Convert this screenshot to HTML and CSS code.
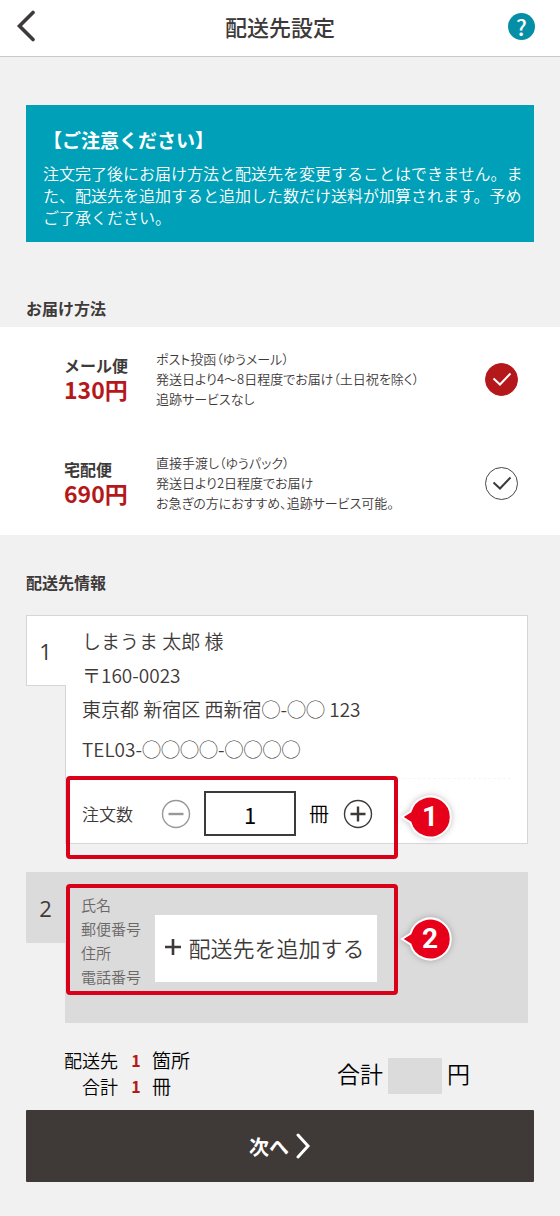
FILE: index.html
```html
<!DOCTYPE html>
<html lang="ja">
<head>
<meta charset="utf-8">
<meta name="viewport" content="width=device-width, initial-scale=1">
<title>配送先設定</title>
<link rel="stylesheet" href="styles.css">
</head>
<body>
<header class="header">
  <button class="icon-button" type="button" aria-label="戻る">
    <svg width="20" height="32" viewBox="0 0 20 32"><path d="M17 2.500 3.500 16 17 29.500" fill="none" stroke="#3e3a39" stroke-width="3.600" stroke-linecap="round" stroke-linejoin="miter"/></svg>
  </button>
  <h1 class="title">配送先設定</h1>
  <button class="help" type="button" aria-label="ヘルプ">?</button>
</header>

<main>
  <section class="notice">
    <h2 class="notice-title">【ご注意ください】</h2>
    <p class="notice-text">注文完了後にお届け方法と配送先を変更することはできません。また、配送先を追加すると追加した数だけ送料が加算されます。予めご了承ください。</p>
  </section>

  <section class="methods">
    <h2 class="section-title">お届け方法</h2>
    <div class="method-list">
      <label class="method">
        <span class="method-head"><span class="method-name">メール便</span><span class="method-price">130円</span></span>
        <span class="method-text">ポスト投函（ゆうメール）<br>発送日より4〜8日程度でお届け（土日祝を除く）<br>追跡サービスなし</span>
        <span class="check"><input class="check-input" type="radio" name="method" checked><svg class="check-mark" width="33" height="33" viewBox="0 0 33 33"><path d="M8.500 15.500 15 21.500 25.500 10.500"/></svg></span>
      </label>
      <label class="method">
        <span class="method-head"><span class="method-name">宅配便</span><span class="method-price">690円</span></span>
        <span class="method-text">直接手渡し（ゆうパック）<br>発送日より2日程度でお届け<br>お急ぎの方におすすめ、追跡サービス可能。</span>
        <span class="check"><input class="check-input" type="radio" name="method"><svg class="check-mark" width="33" height="33" viewBox="0 0 33 33"><path d="M8.500 15.500 15 21.500 25.500 10.500"/></svg></span>
      </label>
    </div>
  </section>

  <section class="addresses">
    <h2 class="section-title">配送先情報</h2>
    <article class="address">
      <div class="tab">1</div>
      <div class="card">
        <p class="line">しまうま 太郎 様</p>
        <p class="line">〒160-0023</p>
        <p class="line">東京都 新宿区 西新宿◯-◯◯ 123</p>
        <p class="line line-tel">TEL03-◯◯◯◯-◯◯◯◯</p>
        <div class="order">
          <label class="order-label" for="count">注文数</label>
          <button class="step step-minus" type="button" aria-label="減らす"><svg width="30" height="30" viewBox="0 0 30 30"><circle cx="15" cy="15" r="13.500"/><path d="M7.500 15h15"/></svg></button>
          <input class="count" id="count" type="text" inputmode="numeric" value="1">
          <span class="unit">冊</span>
          <button class="step" type="button" aria-label="増やす"><svg width="30" height="30" viewBox="0 0 30 30"><circle cx="15" cy="15" r="13.500"/><path d="M7.500 15h15M15 7.500v15"/></svg></button>
        </div>
        <div class="highlight highlight-order"></div>
        <div class="pin pin-order">
          <svg class="pin-shape" width="54" height="52" viewBox="0 0 54 52"><path d="M4 26 12.500 20.500A20.500 20.500 0 1 1 12.500 31.500Z"/></svg>
          <span class="pin-number">1</span>
        </div>
      </div>
    </article>

    <article class="address address-empty">
      <div class="tab">2</div>
      <div class="card">
        <ul class="fields">
          <li>氏名</li>
          <li>郵便番号</li>
          <li>住所</li>
          <li>電話番号</li>
        </ul>
        <button class="add" type="button"><svg width="18" height="18" viewBox="0 0 18 18"><path d="M1 9h16M9 1v16" stroke="#3e3a39" stroke-width="2.600"/></svg>配送先を追加する</button>
        <div class="highlight highlight-add"></div>
        <div class="pin pin-add">
          <svg class="pin-shape" width="54" height="52" viewBox="0 0 54 52"><path d="M4 26 12.500 20.500A20.500 20.500 0 1 1 12.500 31.500Z"/></svg>
          <span class="pin-number">2</span>
        </div>
      </div>
    </article>
  </section>

  <section class="summary">
    <dl class="totals">
      <dt>配送先</dt><dd><strong class="number">1</strong>箇所</dd>
      <dt>合計</dt><dd><strong class="number">1</strong>冊</dd>
    </dl>
    <p class="amount">合計<span class="amount-value"></span>円</p>
  </section>

  <button class="next" type="button">次へ<svg width="16" height="26" viewBox="0 0 16 26"><path d="M3 2 13 13 3 24" fill="none" stroke="#fff" stroke-width="3" stroke-linecap="round"/></svg></button>
</main>
</body>
</html>
```
FILE: styles.css
```css
* {
  box-sizing: border-box;
}

body,
h1,
h2,
p,
ul,
dl,
dd {
  margin: 0;
  padding: 0;
}

body {
  background: #f1f1f1;
  color: #3e3a39;
  font-family: "Noto Sans CJK JP", sans-serif;
  font-size: 16px;
}

button,
input {
  margin: 0;
  padding: 0;
  border: 0;
  color: inherit;
  font: inherit;
}

button {
  background: none;
  cursor: pointer;
}

svg {
  display: block;
}

.header {
  display: grid;
  grid-template-columns: 36px 1fr 27px;
  align-items: center;
  height: 57px;
  padding: 0 25px 4px 16px;
  border-bottom: 1px solid #c9c9c9;
  background: #fff;
}

.icon-button {
  justify-self: start;
}

.title {
  font-size: 22px;
  font-weight: 500;
  line-height: 32px;
  text-align: center;
}

.help {
  width: 27px;
  height: 27px;
  border-radius: 50%;
  background: #058fa6;
  color: #fff;
  font-size: 22px;
  font-weight: 500;
  line-height: 24px;
}

.notice {
  margin: 48px 26px 0;
  padding: 19px 8px 14px 17px;
  background: #00a0b8;
  color: #fff;
}

.notice-title {
  font-size: 19px;
  font-weight: 700;
  line-height: 32px;
}

.notice-text {
  margin-top: 6px;
  font-weight: 350;
  line-height: 22px;
}

.section-title {
  padding: 0 26px;
  font-size: 16px;
  font-weight: 700;
  line-height: 24px;
}

.methods {
  margin-top: 54px;
}

.method-list {
  margin-top: 7px;
  background: #fff;
}

.method {
  display: grid;
  grid-template-columns: 92px 1fr 33px;
  align-items: center;
  height: 104px;
  padding: 0 42px 0 64px;
}

.method-head {
  display: grid;
  padding-bottom: 4px;
}

.method-name {
  font-weight: 700;
  line-height: 24px;
}

.method-price {
  color: #b5181a;
  font-size: 23px;
  font-weight: 700;
  line-height: 24px;
}

.method-text {
  font-size: 13px;
  font-weight: 350;
  font-feature-settings: "palt";
  line-height: 20px;
}

.check {
  display: grid;
}

.check-input,
.check-mark {
  grid-area: 1 / 1;
}

.check-input {
  width: 33px;
  height: 33px;
  border: 1px solid #4a4645;
  border-radius: 50%;
  appearance: none;
}

.check-input:checked {
  border-color: #b5181a;
  background: #b5181a;
}

.check-mark {
  fill: none;
  stroke: #3e3a39;
  stroke-width: 2;
  pointer-events: none;
}

.check-input:checked + .check-mark {
  stroke: #fff;
}

.addresses {
  margin-top: 35px;
}

.address {
  display: grid;
  grid-template-columns: 39px 1fr;
  align-items: start;
  margin: 21px 32px 0 26px;
}

.tab {
  position: relative;
  z-index: 1;
  height: 71px;
  margin-right: -1px;
  padding-right: 2px;
  border: 1px solid #d6d6d6;
  border-right: 0;
  background: #fff;
  font-family: "Open Sans", sans-serif;
  font-size: 22px;
  line-height: 70px;
  text-align: center;
}

.card {
  position: relative;
  padding: 8px 16px 7px;
  border: 1px solid #d6d6d6;
  background: #fff;
}

.line {
  font-size: 19px;
  font-weight: 350;
  line-height: 34px;
}

.line-tel {
  margin-top: 6px;
}

.order {
  display: flex;
  align-items: center;
  margin-top: 12px;
  padding-top: 12px;
  border-top: 1px dashed #f6f6f6;
}

.order-label {
  width: 79px;
  font-size: 17px;
  font-weight: 350;
}

.step svg {
  fill: none;
  stroke: #3e3a39;
}

.step circle {
  stroke-width: 1.400;
}

.step path {
  stroke-width: 2.400;
}

.step-minus svg {
  stroke: #9a9897;
}

.count {
  width: 92px;
  height: 45px;
  margin: 0 13px;
  border: 2px solid #3e3a39;
  background: #fff;
  color: #000;
  font-size: 22px;
  text-align: center;
}

.unit {
  margin-right: 14px;
  color: #000;
  font-size: 20px;
  font-weight: 350;
}

.highlight {
  position: absolute;
  z-index: 2;
  left: 0;
  width: 332px;
  border: 4px solid #d90019;
  border-radius: 4px;
  pointer-events: none;
}

.highlight-order {
  bottom: -16px;
  height: 83px;
}

.highlight-add {
  top: 11px;
  height: 111px;
}

.pin {
  position: absolute;
  z-index: 3;
  left: 332px;
  display: grid;
}

.pin-order {
  bottom: 0;
}

.pin-add {
  top: 40px;
}

.pin-shape,
.pin-number {
  grid-area: 1 / 1;
}

.pin-shape {
  overflow: visible;
  fill: #e60019;
  stroke: #fff;
  stroke-width: 2;
  filter: drop-shadow(0 0 3px rgba(0, 0, 0, 0.25));
}

.pin-number {
  z-index: 1;
  padding-left: 10px;
  color: #fff;
  font-family: Roboto, sans-serif;
  font-size: 28px;
  font-weight: 700;
  line-height: 52px;
  text-align: center;
}

.address-empty {
  margin-top: 28px;
}

.address-empty .tab {
  border-color: #dbdbdb;
  background: #dbdbdb;
}

.address-empty .card {
  display: flex;
  align-items: center;
  gap: 14px;
  padding: 20px 16px 33px 15px;
  border-color: #dbdbdb;
  background: #dbdbdb;
}

.fields {
  color: #6a6766;
  font-size: 15px;
  font-weight: 350;
  line-height: 24px;
  list-style: none;
}

.add {
  display: flex;
  align-items: center;
  justify-content: center;
  gap: 7px;
  width: 222px;
  height: 67px;
  margin-top: 14px;
  padding: 0 4px 2px 0;
  background: #fff;
  font-size: 22px;
  font-weight: 350;
}

.summary {
  display: flex;
  align-items: center;
  justify-content: space-between;
  margin: 24px 90px 0 64px;
  color: #000;
  font-weight: 350;
}

.totals {
  display: grid;
  grid-template-columns: auto auto;
  column-gap: 12px;
  font-size: 18px;
  line-height: 26px;
}

.totals dt {
  text-align: right;
}

.totals dd {
  display: flex;
  gap: 10px;
  font-size: 19px;
}

.number {
  width: 12px;
  color: #b5181a;
  font-size: 16px;
  font-weight: 700;
  text-align: center;
}

.amount {
  display: flex;
  align-items: center;
  gap: 5px;
  font-size: 23px;
  line-height: 36px;
}

.amount-value {
  width: 54px;
  height: 36px;
  margin-top: 6px;
  background: #dbdbdb;
}

.next {
  display: flex;
  align-items: center;
  justify-content: center;
  gap: 6px;
  width: calc(100% - 52px);
  height: 72px;
  margin: 11px 26px 34px;
  border-radius: 1px;
  background: #3f3938;
  color: #fff;
  font-size: 20px;
  font-weight: 700;
}
```
